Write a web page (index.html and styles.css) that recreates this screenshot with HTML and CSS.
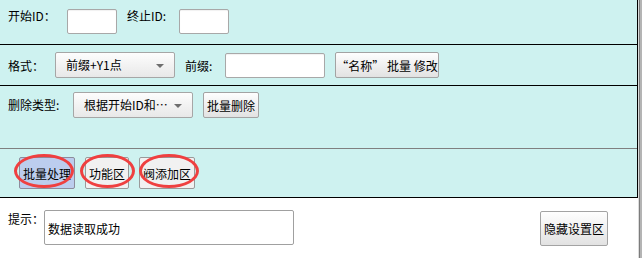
FILE: index.html
```html
<!DOCTYPE html>
<html lang="zh-CN">
<head>
  <meta charset="UTF-8">
  <title>批量处理</title>
  <link rel="stylesheet" href="styles.css">
</head>
<body>
  <div class="page">
    <div class="main">
      <div class="panel">
        <div class="row row-id">
          <span class="label w-start">开始ID：</span>
          <input type="text" class="input small">
          <span class="label w-end">终止ID:</span>
          <input type="text" class="input small">
        </div>

        <div class="row row-format">
          <span class="label w-format">格式：</span>
          <div class="select"><span>前缀+Y1点</span></div>
          <span class="label w-prefix">前缀:</span>
          <input type="text" class="input prefix">
          <button class="btn rename">“名称” 批量 修改</button>
        </div>

        <div class="row row-delete">
          <span class="label w-type">删除类型:</span>
          <div class="select"><span>根据开始ID和⋯</span></div>
          <button class="btn del">批量删除</button>
        </div>

        <div class="tabs">
          <div class="tab">
            <button class="btn tab-btn active wide">批量处理</button>
            <span class="ring ring-1"></span>
          </div>
          <div class="tab">
            <button class="btn tab-btn narrow">功能区</button>
            <span class="ring ring-2"></span>
          </div>
          <div class="tab">
            <button class="btn tab-btn wide">阀添加区</button>
            <span class="ring ring-3"></span>
          </div>
        </div>
      </div>

      <div class="status">
        <span class="label w-tip">提示：</span>
        <textarea class="message" readonly>数据读取成功</textarea>
        <button class="btn hide">隐藏设置区</button>
      </div>
    </div>
    <div class="edge"></div>
  </div>
</body>
</html>
```

FILE: styles.css
```css
* {
  box-sizing: border-box;
}
body {
  margin: 0;
  background: #fff;
  font-family: "Noto Sans CJK SC", sans-serif;
  font-size: 12px;
  color: #000;
}
.page {
  display: flex;
  width: 642px;
  height: 258px;
  overflow: hidden;
}
.main {
  width: 638px;
}
.edge {
  width: 4px;
  background: linear-gradient(to right, #dcdcdc 0 1px, #7c7c7c 1px 2px, #b4b4b4 2px 4px);
}
.panel {
  background: #cef2f0;
  border-right: 1px solid #000;
  border-bottom: 1px solid #000;
}
.row {
  display: flex;
  gap: 10px;
  padding-left: 8px;
  border-bottom: 1px solid #000;
}
.row-id {
  height: 45px;
  align-items: flex-start;
  padding-top: 9px;
}
.row-id .label {
  line-height: 12px;
  padding-top: 1px;
}
.row-format {
  height: 41px;
  align-items: center;
}
.row-delete {
  height: 63px;
  align-items: flex-start;
  padding-top: 6px;
  border-bottom-color: #808080;
}
.row-delete .label {
  line-height: 26px;
}
.label {
  flex-shrink: 0;
  white-space: nowrap;
}
.w-start { width: 49px; }
.w-end { width: 42px; }
.w-format { width: 37px; }
.w-prefix { width: 30px; }
.w-type { width: 55px; }
.w-tip { width: 36px; }

.input {
  height: 25px;
  border: 1px solid #a8a8a8;
  border-radius: 2px;
  background: #fff;
  box-shadow: inset 0 1px 1px rgba(0,0,0,0.06);
  font: inherit;
  padding: 0 3px;
}
.input.small {
  width: 50px;
}
.input.prefix {
  width: 100px;
}
.select {
  position: relative;
  width: 120px;
  height: 26px;
  line-height: 24px;
  padding-left: 10px;
  border: 1px solid #a6a6a6;
  border-radius: 2px;
  background: linear-gradient(#fdfdfd, #e8e8e8);
  white-space: nowrap;
  overflow: hidden;
}
.select::after {
  content: "";
  position: absolute;
  right: 10px;
  top: 11px;
  border-left: 4px solid transparent;
  border-right: 4px solid transparent;
  border-top: 4px solid #6e6e6e;
}
.btn {
  height: 26px;
  padding: 0;
  border: 1px solid #a3a3a3;
  border-radius: 2px;
  background: linear-gradient(#fefefe, #e2e2e2);
  font: inherit;
  color: #000;
  cursor: pointer;
  white-space: nowrap;
}
.btn.rename {
  width: 104px;
}
.btn.del {
  width: 56px;
}
.tabs {
  display: flex;
  gap: 10px;
  height: 48px;
  padding: 8px 0 0 19px;
}
.tab {
  position: relative;
}
.tab-btn {
  height: 32px;
  border-color: #9a9a9a;
  background: #f1f1f1;
}
.tab-btn.active {
  background: #bccdee;
  border-color: #8c8c9c;
}
.tab-btn.wide {
  width: 56px;
}
.tab-btn.narrow {
  width: 44px;
}
.ring {
  position: absolute;
  top: -3px;
  height: 34px;
  border: 3px solid #ef4040;
  border-radius: 50%;
  pointer-events: none;
}
.ring-1 {
  left: -5px;
  width: 60px;
}
.ring-2 {
  left: -5px;
  width: 55px;
}
.ring-3 {
  left: 0;
  width: 60px;
}
.status {
  display: flex;
  align-items: flex-start;
  padding: 12px 30px 0 8px;
}
.message {
  width: 250px;
  height: 35px;
  padding: 9px 3px 0;
  border: 1px solid #a0a0a0;
  border-radius: 2px;
  font: inherit;
  resize: none;
  overflow: hidden;
}
.btn.hide {
  width: 68px;
  height: 35px;
  margin: 1px 0 0 auto;
}
```
